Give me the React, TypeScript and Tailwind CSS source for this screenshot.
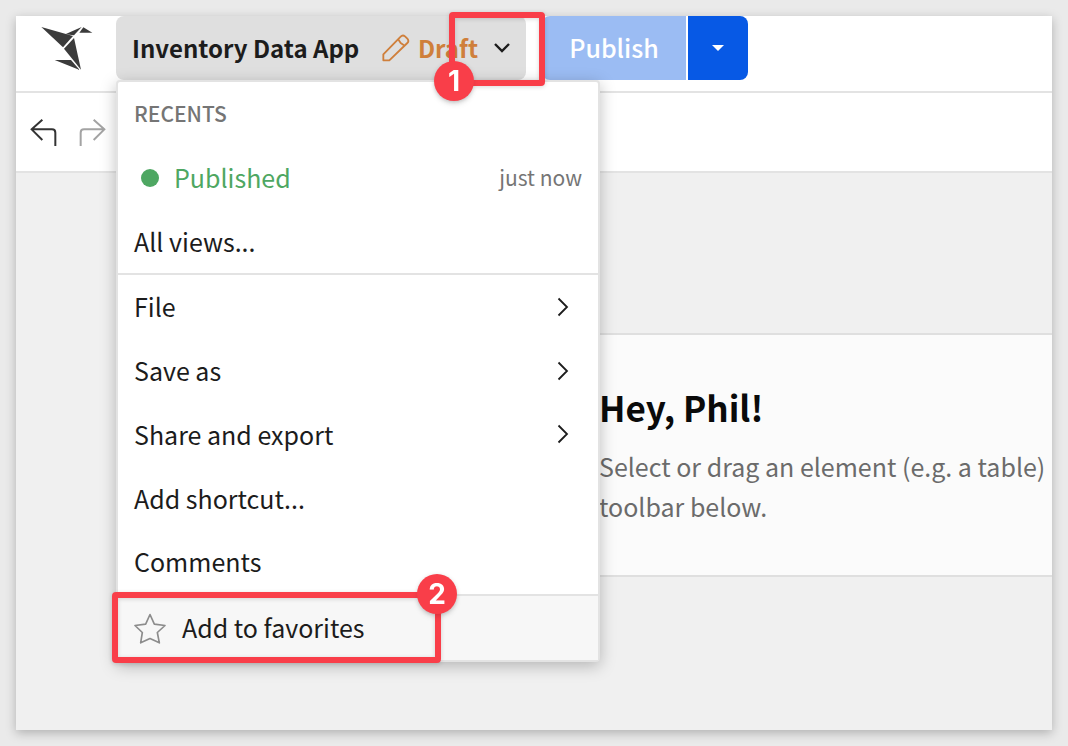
import type { ReactNode } from "react";

function BirdLogo() {
  return (
    <svg viewBox="0 0 156 135" className="h-[45px] w-[52px]" fill="#3b3b3b" aria-hidden="true">
      <path d="M1 3 96 30 66 64Z" />
      <path d="M73 25 122 3 99 28Z" />
      <path d="M127 4 154 20H115Z" />
      <path d="M69 68 99 36 120 131Z" />
      <path d="M41 102H90L116 132Z" />
    </svg>
  );
}

function UndoIcon() {
  return (
    <svg viewBox="0 0 84 84" className="size-7" fill="none" stroke="currentColor" strokeWidth="6" aria-hidden="true">
      <path d="M37 5 5 34 37 66M5 34H66Q76 34 76 44V84" />
    </svg>
  );
}

function RedoIcon() {
  return (
    <svg viewBox="0 0 84 84" className="size-7" fill="none" stroke="currentColor" strokeWidth="6" aria-hidden="true">
      <path d="M47 5 79 34 47 66M79 34H18Q8 34 8 44V84" />
    </svg>
  );
}

function PencilIcon() {
  return (
    <svg viewBox="0 0 84 84" className="size-7" fill="none" stroke="currentColor" strokeWidth="5.5" strokeLinejoin="round" aria-hidden="true">
      <path d="M4 79V61L56 8Q62 1 69 7L76 14Q82 21 76 27L22 79ZM48 15 56 27 68 35" />
    </svg>
  );
}

function ChevronRight() {
  return (
    <svg viewBox="0 0 12 20" className="h-5 w-3" fill="none" stroke="#1c1c1c" strokeWidth="1.8" aria-hidden="true">
      <path d="M1.5 1.5 10 10 1.5 18.5" />
    </svg>
  );
}

function StarIcon() {
  return (
    <svg viewBox="0 0 96 92" className="h-[31px] w-8" fill="none" stroke="#8c8c8c" strokeWidth="5" strokeLinejoin="round" aria-hidden="true">
      <path d="M48 4 61 33 93 37 70 58 76 89 48 76 20 89 25 58 3 37 35 33Z" />
    </svg>
  );
}

function Step({ className, children }: { className: string; children: ReactNode }) {
  return (
    <span
      className={`absolute flex size-10 items-center justify-center rounded-full bg-[#f93e49] font-['Inter',sans-serif] text-[28px] font-bold leading-none text-white shadow-md ${className}`}
    >
      {children}
    </span>
  );
}

function MenuItem({ label, submenu = false }: { label: string; submenu?: boolean }) {
  return (
    <button type="button" role="menuitem" className="flex min-h-0 w-full flex-1 items-center justify-between pl-4 pr-[29px] text-left">
      <span>{label}</span>
      {submenu && <ChevronRight />}
    </button>
  );
}

function DocumentMenu() {
  return (
    <div
      role="menu"
      className="absolute left-0 top-16 w-[484px] rounded-sm border-2 border-[#e3e3e3] bg-white text-[25px] text-[#1c1c1c] shadow-[0_4px_16px_rgba(0,0,0,0.25)]"
    >
      <div className="flex h-[193px] flex-col border-b-2 border-[#e3e3e3]">
        <div className="flex h-16 items-center px-4 text-[21px] font-medium text-[#757575]">RECENTS</div>
        <button type="button" role="menuitem" className="flex h-16 w-full items-center pl-[23px] pr-4 text-left">
          <span className="size-[18px] rounded-full bg-[#4ea762]" />
          <span className="ml-[15px] text-[#4ea762]">Published</span>
          <span className="ml-auto text-[21px] text-[#757575]">just now</span>
        </button>
        <MenuItem label="All views..." />
      </div>
      <div className="flex h-[319px] flex-col">
        <MenuItem label="File" submenu />
        <MenuItem label="Save as" submenu />
        <MenuItem label="Share and export" submenu />
        <MenuItem label="Add shortcut..." />
        <MenuItem label="Comments" />
      </div>
      <div className="relative border-t-2 border-[#e3e3e3] bg-[#f7f7f7]">
        <button type="button" role="menuitem" className="flex h-16 w-full items-center gap-4 px-4 text-left">
          <StarIcon />
          <span>Add to favorites</span>
        </button>
        <div className="pointer-events-none absolute -left-1.5 -top-1 h-[71px] w-[329px] rounded-sm border-6 border-[#f93e49] drop-shadow-sm">
          <Step className="-right-[22px] -top-6">2</Step>
        </div>
      </div>
    </div>
  );
}

export default function App() {
  return (
    <div className="flex min-h-screen flex-col bg-[#eaeaea] p-4 font-['Noto_Sans_CJK_SC',sans-serif]">
      <div className="flex flex-1 flex-col bg-white shadow-[0_3px_10px_rgba(0,0,0,0.25)]">
        <header className="flex h-[77px] items-start border-b-2 border-[#e3e3e3]">
          <a href="#home" aria-label="Home" className="flex w-[100px] shrink-0 pl-[25px] pt-2.5">
            <BirdLogo />
          </a>
          <div className="relative z-10 w-[410px] shrink-0">
            <button
              type="button"
              aria-haspopup="menu"
              aria-expanded="true"
              className="flex h-16 w-full items-center rounded-lg bg-[#dfdfdf] px-4 text-2xl font-bold text-[#1c1c1c]"
            >
              <span className="whitespace-nowrap">Inventory Data App</span>
              <span className="ml-auto flex items-center gap-2 text-[#cf7f3b]">
                <PencilIcon />
                Draft
              </span>
              <svg viewBox="0 0 16 10" className="ml-4 h-2.5 w-4" fill="none" stroke="#1c1c1c" strokeWidth="2.4" aria-hidden="true">
                <path d="M1 1 8 8 15 1" />
              </svg>
            </button>
            <DocumentMenu />
            <div className="pointer-events-none absolute -top-1 left-[333px] h-[74px] w-24 rounded-sm border-6 border-[#f93e49] drop-shadow-sm">
              <Step className="-left-[21px] top-[43px]">1</Step>
            </div>
          </div>
          <div className="ml-4 flex gap-0.5">
            <button type="button" className="h-16 w-36 rounded-l-lg bg-[#9bbcf3] text-[25px] font-medium text-white">
              Publish
            </button>
            <button
              type="button"
              aria-label="Publish options"
              className="flex h-16 w-[60px] items-center justify-center rounded-r-lg bg-[#0759e5]"
            >
              <svg viewBox="0 0 12 6" className="h-1.5 w-3" fill="#fff" aria-hidden="true">
                <path d="M0 0H12L6 6Z" />
              </svg>
            </button>
          </div>
        </header>

        <div className="flex h-20 items-center gap-5 border-b-2 border-[#e3e3e3] px-3.5">
          <button type="button" aria-label="Undo" className="text-[#333333]">
            <UndoIcon />
          </button>
          <button type="button" aria-label="Redo" className="text-[#a3a3a3]">
            <RedoIcon />
          </button>
        </div>

        <main className="flex-1 overflow-hidden bg-[#f0f0f0] pl-[183px] pt-40">
          <section className="border-y-2 border-[#dfdfdf] bg-[#fbfbfb] pb-[49px] pl-[400px] pt-12">
            <h1 className="text-[35px]/12 font-bold text-[#0a0a0a]">Hey, Phil!</h1>
            <p className="mt-[15px] whitespace-nowrap text-[25px]/10 text-[#6b6b6b]">
              Select or drag an element (e.g. a table)
              <br />
              toolbar below.
            </p>
          </section>
        </main>
      </div>
    </div>
  );
}
